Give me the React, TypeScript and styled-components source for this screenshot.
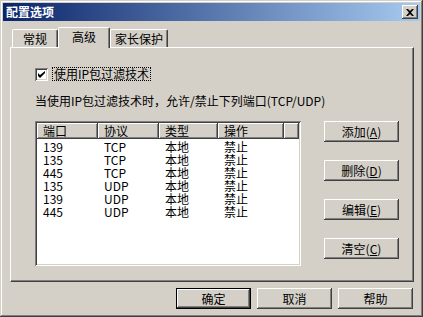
import styled, { createGlobalStyle } from "styled-components";

const GlobalStyle = createGlobalStyle`
  html, body {
    margin: 0;
    padding: 0;
    background: #d4d0c8;
  }
  * {
    box-sizing: border-box;
  }
`;

const FONT = `"Noto Sans CJK SC", "Liberation Sans", sans-serif`;

const raised = `
  box-shadow: inset -1px -1px #404040, inset 1px 1px #ffffff,
    inset -2px -2px #808080, inset 2px 2px #d4d0c8;
`;

const Window = styled.div`
  width: 423px;
  height: 317px;
  padding: 3px;
  background: #d4d0c8;
  font-family: ${FONT};
  font-size: 12px;
  color: #000;
  box-shadow: inset -1px -1px #404040, inset 1px 1px #d4d0c8,
    inset -2px -2px #808080, inset 2px 2px #ffffff;
  display: flex;
  flex-direction: column;
`;

const TitleBar = styled.div`
  height: 18px;
  display: flex;
  align-items: center;
  justify-content: space-between;
  padding: 0 2px 0 3px;
  background: linear-gradient(to right, #0a246a, #a6caf0);
`;

const Title = styled.span`
  color: #fff;
  font-weight: bold;
  font-size: 12px;
  line-height: 18px;
  letter-spacing: 0px;
`;

const CloseBtn = styled.div`
  width: 16px;
  height: 14px;
  background: #d4d0c8;
  ${raised}
  display: flex;
  align-items: center;
  justify-content: center;
`;

const Body = styled.div`
  padding: 6px 7px 0 7px;
`;

const TabStrip = styled.div`
  display: flex;
  align-items: flex-end;
  height: 20px;
  padding-left: 2px;
`;

interface TabProps {
  w: number;
  active?: boolean;
}

const Tab = styled.div<TabProps>`
  width: ${(p) => p.w}px;
  height: ${(p) => (p.active ? 21 : 18)}px;
  margin-bottom: ${(p) => (p.active ? -1 : 0)}px;
  position: relative;
  z-index: ${(p) => (p.active ? 2 : 1)};
  background: #d4d0c8;
  border-top: 1px solid #fff;
  border-left: 1px solid #fff;
  border-right: 1px solid #404040;
  box-shadow: inset -1px 0 #808080;
  border-radius: 2px 2px 0 0;
  display: flex;
  align-items: ${(p) => (p.active ? "flex-start" : "center")};
  padding-top: ${(p) => (p.active ? 1 : 0)}px;
  justify-content: center;
  line-height: 16px;
`;

const Panel = styled.div`
  width: 404px;
  height: 235px;
  background: #d4d0c8;
  border-top: 1px solid #fff;
  border-left: 1px solid #fff;
  border-right: 1px solid #404040;
  border-bottom: 1px solid #404040;
  box-shadow: inset -1px -1px #808080;
  padding: 19px 0 0 24px;
  display: flex;
  flex-direction: column;
`;

const CheckRow = styled.div`
  display: flex;
  align-items: center;
  height: 14px;
`;

const Box = styled.div`
  width: 13px;
  height: 13px;
  background: #fff;
  box-shadow: inset 1px 1px #808080, inset -1px -1px #ffffff,
    inset 2px 2px #404040, inset -2px -2px #d4d0c8;
  display: flex;
  align-items: center;
  justify-content: center;
`;

const FocusLabel = styled.span`
  margin-left: 4px;
  padding: 0 1px;
  border: 1px dotted #000;
  line-height: 12px;
  height: 14px;
  display: flex;
  align-items: center;
`;

const Description = styled.div`
  margin-top: 13px;
  height: 14px;
  line-height: 14px;
`;

const ContentRow = styled.div`
  margin-top: 13px;
  display: flex;
  gap: 23px;
`;

const ListBox = styled.div`
  width: 266px;
  height: 145px;
  background: #fff;
  padding: 2px;
  box-shadow: inset 1px 1px #808080, inset -1px -1px #ffffff,
    inset 2px 2px #404040, inset -2px -2px #d4d0c8;
  display: flex;
  flex-direction: column;
  overflow: hidden;
`;

const Row = styled.div`
  display: flex;
  height: 13px;
  line-height: 13px;
`;

const HeaderRow = styled(Row)`
  height: 16px;
  line-height: 16px;
  margin-bottom: 1px;
`;

interface CellProps {
  w?: number;
}

const HeadCell = styled.div<CellProps>`
  width: ${(p) => (p.w ? `${p.w}px` : "auto")};
  flex: ${(p) => (p.w ? "none" : "1")};
  background: #d4d0c8;
  padding-left: 6px;
  box-shadow: inset -1px -1px #404040, inset 1px 1px #ffffff,
    inset -2px -2px #808080;
`;

const Cell = styled.div<CellProps>`
  width: ${(p) => p.w}px;
  padding-left: 6px;
  white-space: nowrap;
`;

const ButtonColumn = styled.div`
  display: flex;
  flex-direction: column;
  gap: 18px;
`;

interface BtnProps {
  isDefault?: boolean;
}

const Button = styled.div<BtnProps>`
  width: 75px;
  height: 21px;
  background: #d4d0c8;
  display: flex;
  align-items: center;
  justify-content: center;
  line-height: 14px;
  ${(p) =>
    p.isDefault
      ? `box-shadow: inset 0 0 0 1px #000, inset -2px -2px #404040, inset 2px 2px #ffffff, inset -3px -3px #808080;`
      : raised}
`;

const Key = styled.span`
  text-decoration: underline;
`;

const Footer = styled.div`
  display: flex;
  justify-content: flex-end;
  gap: 6px;
  margin-top: 6px;
  padding-right: 7px;
`;

const columns = [61, 61, 59, 66];

const rows = [
  ["139", "TCP", "本地", "禁止"],
  ["135", "TCP", "本地", "禁止"],
  ["445", "TCP", "本地", "禁止"],
  ["135", "UDP", "本地", "禁止"],
  ["139", "UDP", "本地", "禁止"],
  ["445", "UDP", "本地", "禁止"],
];

const App = () => {
  return (
    <>
      <GlobalStyle />
      <Window>
        <TitleBar>
          <Title>配置选项</Title>
          <CloseBtn>
            <svg width="8" height="7" viewBox="0 0 8 7">
              <path d="M0 0h2l2 2 2-2h2L5 3.5 8 7H6L4 5 2 7H0l3-3.5z" fill="#000" />
            </svg>
          </CloseBtn>
        </TitleBar>
        <Body>
          <TabStrip>
            <Tab w={46}>常规</Tab>
            <Tab w={52} active>
              高级
            </Tab>
            <Tab w={58}>家长保护</Tab>
          </TabStrip>
          <Panel>
            <CheckRow>
              <Box>
                <svg width="7" height="7" viewBox="0 0 7 7">
                  <path d="M0 2v3l2 2 5-5V-0L2 4z" fill="#000" />
                </svg>
              </Box>
              <FocusLabel>使用IP包过滤技术</FocusLabel>
            </CheckRow>
            <Description>当使用IP包过滤技术时，允许/禁止下列端口(TCP/UDP)</Description>
            <ContentRow>
              <ListBox>
                <HeaderRow>
                  <HeadCell w={columns[0]}>端口</HeadCell>
                  <HeadCell w={columns[1]}>协议</HeadCell>
                  <HeadCell w={columns[2]}>类型</HeadCell>
                  <HeadCell w={columns[3]}>操作</HeadCell>
                  <HeadCell />
                </HeaderRow>
                {rows.map((r, i) => (
                  <Row key={i}>
                    {r.map((c, j) => (
                      <Cell key={j} w={columns[j]}>
                        {c}
                      </Cell>
                    ))}
                  </Row>
                ))}
              </ListBox>
              <ButtonColumn>
                <Button>
                  添加(<Key>A</Key>)
                </Button>
                <Button>
                  删除(<Key>D</Key>)
                </Button>
                <Button>
                  编辑(<Key>E</Key>)
                </Button>
                <Button>
                  清空(<Key>C</Key>)
                </Button>
              </ButtonColumn>
            </ContentRow>
          </Panel>
        </Body>
        <Footer>
          <Button isDefault>确定</Button>
          <Button>取消</Button>
          <Button>帮助</Button>
        </Footer>
      </Window>
    </>
  );
};

export default App;
